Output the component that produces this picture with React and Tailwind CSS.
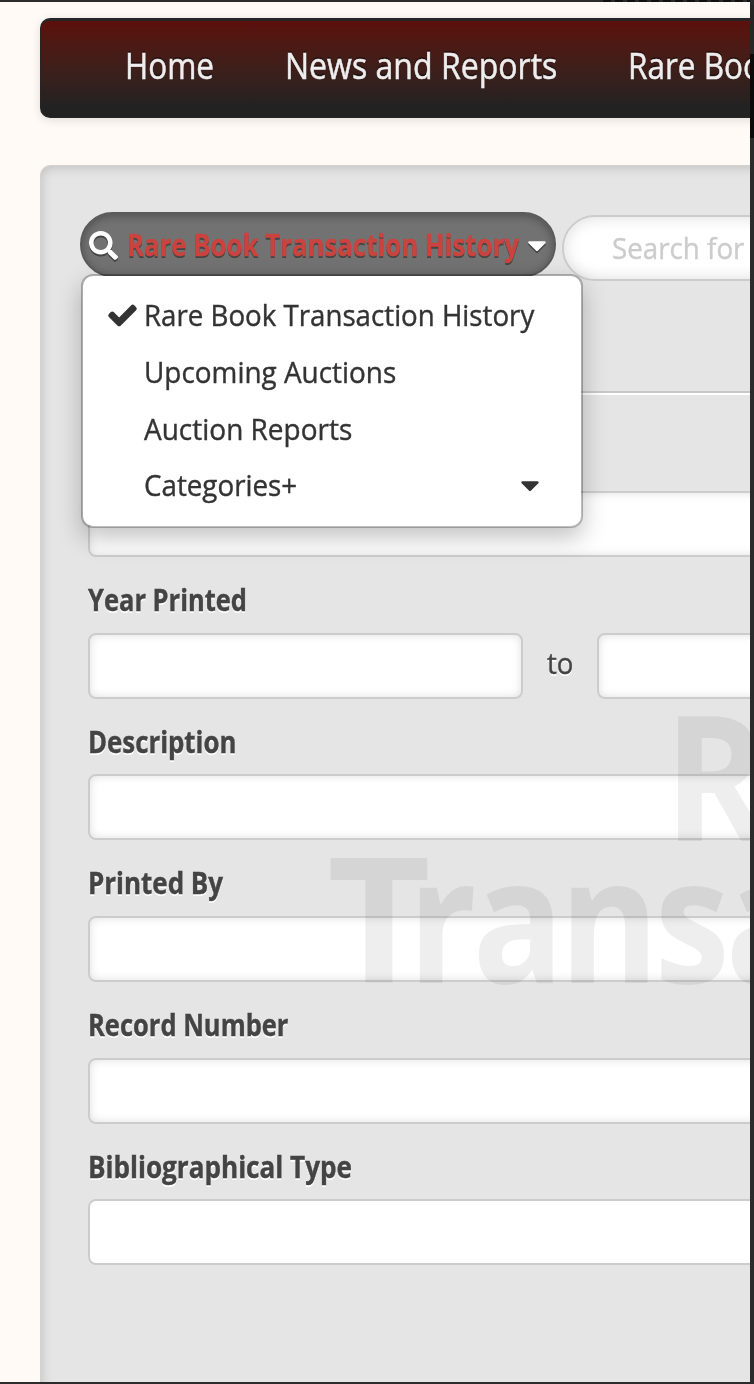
import { FaCaretDown, FaCheck, FaSearch } from "react-icons/fa";

const navItems = [
  { label: "Home", box: "w-[160px]", fit: "scale-x-[.875]" },
  { label: "News and Reports", box: "w-[343px]", fit: "scale-x-[.89]" },
  { label: "Rare Books", box: "w-[240px]", fit: "scale-x-[.875]" },
];

const scopes = [
  { label: "Rare Book Transaction History", fit: "scale-x-[.923]", checked: true },
  { label: "Upcoming Auctions", fit: "scale-x-[.93]" },
  { label: "Auction Reports", fit: "scale-x-[.933]" },
  { label: "Categories+", fit: "scale-x-[.925]", more: true },
];

const fields = [
  { label: "Description", fit: "scale-x-[.86]" },
  { label: "Printed By", fit: "scale-x-[.865]" },
  { label: "Record Number", fit: "scale-x-[.85]" },
  { label: "Bibliographical Type", fit: "scale-x-[.87]", flat: true },
];

// Narrowed text, kept on one line
function Text({ fit, className = "", children }) {
  return (
    <span className={`inline-block origin-left whitespace-nowrap ${fit} ${className}`}>
      {children}
    </span>
  );
}

function Label({ fit, children }) {
  return (
    <label className="flex h-[75.7px] items-center pt-[10px] text-[30px] leading-none font-bold text-[#444] [-webkit-text-stroke:0.4px_#444] [text-shadow:0_2px_0_#fff]">
      <Text fit={fit}>{children}</Text>
    </label>
  );
}

function Input({ className = "w-[900px]", flat }) {
  return (
    <input
      className={`block h-[66px] shrink-0 rounded-lg border-2 border-[#ccc] bg-white ${
        flat ? "" : "shadow-[inset_0_0_10px_rgba(0,0,0,0.13)]"
      } ${className}`}
    />
  );
}

function ScopeMenu() {
  return (
    <ul className="absolute top-[62px] left-px z-20 h-[254px] w-[502px] rounded-xl border-2 border-black/25 bg-white bg-clip-padding pt-[11px] text-[30px] leading-none font-medium text-[#333] shadow-[0_10px_24px_rgba(0,0,0,0.24)] [-webkit-text-stroke:0.4px_#333]">
      {scopes.map((s) => (
        <li key={s.label} className="flex h-[56.7px] items-center pl-[26px]">
          <span className="w-[35px] shrink-0">
            {s.checked && (
              <FaCheck size={27} className="overflow-visible stroke-[#333] [stroke-linejoin:round] [stroke-width:28px]" />
            )}
          </span>
          <Text fit={s.fit}>{s.label}</Text>
          {s.more && <FaCaretDown size={30} className="mr-[36px] ml-auto" />}
        </li>
      ))}
    </ul>
  );
}

export default function App() {
  return (
    <div className="flex h-[1384px] w-[754px] overflow-hidden bg-[#2b2b2b] font-['Open_Sans','Noto_Sans',sans-serif]">
      <div className="flex w-[750px] shrink-0 flex-col">
        <div className="flex h-[2px] shrink-0 justify-end">
          <div className="w-[147px] bg-[repeating-linear-gradient(90deg,#111_0_8px,#2b2b2b_8px_12px)]" />
        </div>

        <div className="h-[1380px] overflow-hidden bg-[#fffaf6] pt-4 pl-10">
          <nav className="flex h-[100px] w-[900px] items-center rounded-[10px] border border-t-[3px] border-[#262626] bg-linear-to-b from-[#5c0f0b] to-[#222] to-90% pl-[84px] text-[36px] leading-none font-medium text-[#eee] shadow-[0_2px_10px_rgba(0,0,0,0.12)] [-webkit-text-stroke:0.5px_#eee] [text-shadow:0_-2px_0_rgba(0,0,0,0.4)]">
            {navItems.map((item) => (
              <a key={item.label} className={`shrink-0 pb-[6px] ${item.box}`}>
                <Text fit={item.fit}>{item.label}</Text>
              </a>
            ))}
          </nav>

          <main className="relative mt-[47px] h-[1300px] w-[900px] rounded-[10px] border border-[#d4d3d1] bg-[#e5e5e5] pt-[46px] pl-[39px] shadow-[inset_0_1px_12px_rgba(0,0,0,0.18)]">
            {/* Search bar */}
            <div className="relative ml-2 flex h-[181px] items-start border-b-2 border-[#c8c8c8] shadow-[0_2px_0_#fff]">
              <div className="relative mr-[6px] -ml-2 shrink-0">
                <button className="flex h-[65px] w-[476px] items-center rounded-full border-2 border-[#5a5a5a] bg-[#727272] pt-[1px] pl-[7px] text-[30px] leading-none font-bold text-[#cb433e] shadow-[inset_0_2px_8px_rgba(0,0,0,0.3)]">
                  <FaSearch size={29} className="mr-[9px] shrink-0 overflow-visible text-white drop-shadow-[0_2px_0_#444]" />
                  <span className="w-[395px] text-left [-webkit-text-stroke:0.4px_#cb433e] [text-shadow:0_2px_0_#444]">
                    <Text fit="scale-x-[.86]">Rare Book Transaction History</Text>
                  </span>
                  <FaCaretDown size={30} className="shrink-0 text-white drop-shadow-[0_2px_0_#444]" />
                </button>
                <ScopeMenu />
              </div>
              <div className="mt-[3px] flex h-[66px] w-[500px] items-center rounded-full border-2 border-[#ccc] bg-white pl-12 text-[30px] leading-none font-medium text-[#ccc] shadow-[inset_0_0_16px_rgba(0,0,0,0.14)] [-webkit-text-stroke:0.4px_#ccc]">
                <Text fit="scale-x-[.925]">Search for</Text>
              </div>
            </div>

            {/* Search form */}
            <form className="pt-[98px] pl-[8px]">
              <Input />
              <Label fit="scale-x-[.85]">Year Printed</Label>
              <div className="flex items-center">
                <Input className="w-[435px]" />
                <span className="w-[74px] shrink-0 pb-[6px] pl-6 text-[30px] leading-none font-medium text-[#444] [-webkit-text-stroke:0.4px_#444] [text-shadow:0_2px_0_#fff]">
                  <Text fit="scale-x-[.92]">to</Text>
                </span>
                <Input className="w-[436px]" />
              </div>
              {fields.map((f) => (
                <div key={f.label}>
                  <Label fit={f.fit}>{f.label}</Label>
                  <Input flat={f.flat} />
                </div>
              ))}
            </form>

            {/* Watermark over the form */}
            <div className="pointer-events-none absolute top-[537px] left-[286px] w-[1100px] text-[174px] leading-[142px] font-bold text-black/[.065]">
              <div className="pl-[337px]">
                <Text fit="scale-x-[.9]">Rare</Text>
              </div>
              <div>
                <Text fit="scale-x-[1.03]">T</Text>
                <Text fit="scale-x-[.87]" className="-ml-[20px] tracking-[-5px]">
                  ransaction
                </Text>
              </div>
            </div>
          </main>
        </div>
      </div>

      {/* Page edge behind the panel */}
      <div className="flex w-1 flex-col pt-[5px]">
        <div className="h-[49px] bg-[#262626]" />
        <div className="h-[84px] bg-[#0a0a0a]" />
      </div>
    </div>
  );
}
